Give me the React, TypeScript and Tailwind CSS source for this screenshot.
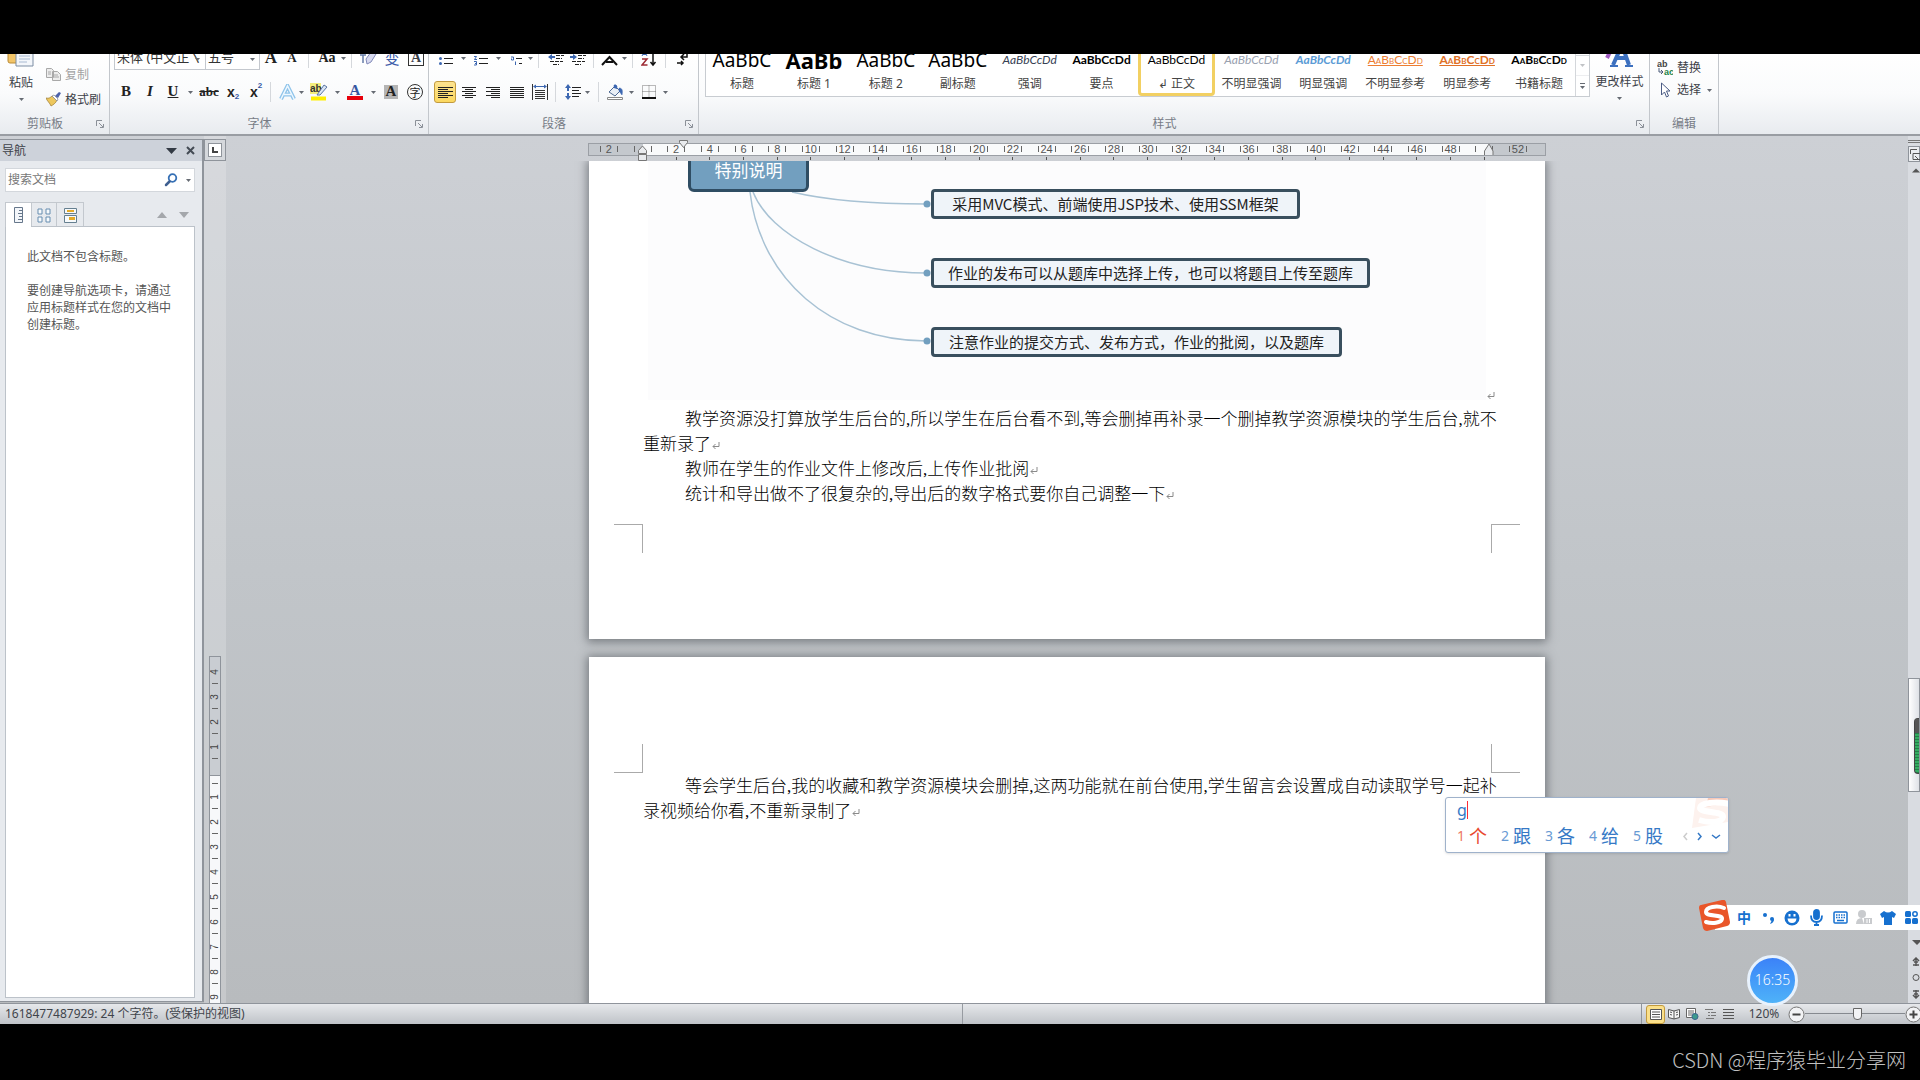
import type { ReactNode } from 'react'

const styleCards = [
  { name: '标题', preview: 'AaBbC', look: "font-['Noto_Sans'] text-[19px] leading-6 text-black" },
  { name: '标题 1', preview: 'AaBb', look: "font-['Noto_Sans'] text-[22px] leading-6 font-bold text-black" },
  { name: '标题 2', preview: 'AaBbC', look: "font-['Noto_Sans'] text-[19px] leading-6 text-black" },
  { name: '副标题', preview: 'AaBbC', look: "font-['Noto_Sans'] text-[19px] leading-6 text-black" },
  { name: '强调', preview: 'AaBbCcDd', look: "font-['Lato'] text-xs leading-6 italic text-gray-700" },
  { name: '要点', preview: 'AaBbCcDd', look: "font-['Lato'] text-xs leading-6 font-bold text-black" },
  { name: '↲ 正文', preview: 'AaBbCcDd', look: "font-['Lato'] text-xs leading-6 text-black", active: true },
  { name: '不明显强调', preview: 'AaBbCcDd', look: "font-['Lato'] text-xs leading-6 italic text-gray-400" },
  { name: '明显强调', preview: 'AaBbCcDd', look: "font-['Lato'] text-xs leading-6 font-bold italic text-[#5b9bd5]" },
  { name: '不明显参考', preview: 'AaBbCcDd', look: "font-['Lato'] text-xs leading-6 [font-variant:small-caps] underline text-[#ed7d31]" },
  { name: '明显参考', preview: 'AaBbCcDd', look: "font-['Lato'] text-xs leading-6 [font-variant:small-caps] font-bold underline text-[#e07026]" },
  { name: '书籍标题', preview: 'AaBbCcDd', look: "font-['Lato'] text-xs leading-6 [font-variant:small-caps] font-bold text-black" }
]

const rulerUnits = Array.from({ length: 28 }, (_, i) => i * 2 - 2)
const verticalUnits = [4, 3, 2, 1, 0, 1, 2, 3, 4, 5, 6, 7, 8, 9]
const candidates = ['个', '跟', '各', '给', '股']

function Caret({ className = 'w-3' }: { className?: string }) {
  return (
    <span className={`flex shrink-0 items-center justify-center ${className}`}>
      <svg width="5" height="3" viewBox="0 0 5 3">
        <path d="M0 0h5L2.500 3z" fill="#666b73" />
      </svg>
    </span>
  )
}

function Tool({ label, className = 'w-6', children }: { label: string; className?: string; children: ReactNode }) {
  return (
    <button type="button" aria-label={label} className={`flex h-[22px] shrink-0 items-center justify-center ${className}`}>
      {children}
    </button>
  )
}

function Divider({ className = 'mx-1' }: { className?: string }) {
  return <span className={`h-5 w-px shrink-0 bg-[#d5d8dc] ${className}`} />
}

function Group({ title, className, launcher = true, children }: { title: string; className: string; launcher?: boolean; children: ReactNode }) {
  return (
    <section className={`flex h-full shrink-0 flex-col justify-end border-r border-[#c3c7cc] ${className}`}>
      {children}
      <div className="flex h-[22px] shrink-0 items-center pt-[2px] text-[#777c86]">
        <span className={`flex-1 text-center ${launcher ? 'pr-[6px]' : ''}`}>{title}</span>
        {launcher ? (
          <button type="button" aria-label={`${title}设置`} className="w-[13px]">
            <svg width="8" height="8" viewBox="0 0 8 8" fill="none" stroke="#8b9098">
              <path d="M.5 6V.5H6M3 3l4 4M7.500 4v3.500H4" />
            </svg>
          </button>
        ) : null}
      </div>
    </section>
  )
}

function Lines({ rows, color = '#222' }: { rows: number[][]; color?: string }) {
  return (
    <svg width="15" height="13" viewBox="0 0 15 13" stroke={color} strokeWidth="1">
      {rows.map(([from, to], i) => (
        <path key={i} d={`M${from} ${i * 2 + 1.5}H${to}`} />
      ))}
    </svg>
  )
}

function ListIcon({ kind }: { kind: 'bullet' | 'number' | 'multi' | 'outdent' | 'indent' }) {
  if (kind === 'outdent' || kind === 'indent') {
    return (
      <svg width="17" height="15" viewBox="0 0 17 15">
        <path d="M2 1.500h13M8 4.500h8M8 7.500h6M2 10.500h13M5 13.500h6" stroke="#222" strokeDasharray="4 1" />
        <path d={kind === 'outdent' ? 'M0 6l4-3v2h3v2H4v2z' : 'M7 6L3 3v2H0v2h3v2z'} fill="#3c67b1" />
      </svg>
    )
  }
  return (
    <svg width="15" height="16" viewBox="0 0 15 16">
      <path d={kind === 'multi' ? 'M5 2.500h9M8 8.500h6M11 13.500h3' : 'M5 2.500h9M5 8.500h9M5 13.500h9'} stroke="#222" />
      {kind === 'bullet' ? (
        <g fill="#3c67b1">
          <circle cx="1.500" cy="2.500" r="1.500" />
          <circle cx="1.500" cy="8.500" r="1.500" />
          <circle cx="1.500" cy="13.500" r="1.500" />
        </g>
      ) : (
        <g fill="none" stroke="#3c67b1">
          <path d={kind === 'number' ? 'M0 1.500h1.500V4M0 6.500h2.500L.5 9.500H3M0 11.500h2.500v3.500H0M1 13.500h1' : 'M0 1.500h2V4M3 7h2.500v3H3.500V8.500M7.500 11.500V15'} />
        </g>
      )}
    </svg>
  )
}

function ClipboardGroup() {
  return (
    <Group title="剪贴板" className="w-[110px]">
      <div className="flex shrink-0 items-end gap-2 pl-2">
        <button type="button" className="flex w-[26px] flex-col items-center">
          <svg width="28" height="30" viewBox="0 0 28 30">
            <rect x="1" y="2" width="18" height="24" rx="2" fill="#f3c568" stroke="#b98a35" />
            <path d="M9 8h17v21H9z" fill="#f4f7fb" stroke="#7d8da3" />
            <path d="M12 13h11M12 16h11M12 19h11M12 22h11M12 25h8" stroke="#a9bad2" />
          </svg>
          <span className="mt-2 leading-4">粘贴</span>
          <Caret className="mt-[2px] mb-[7px] h-3" />
        </button>
        <div className="flex flex-col pl-1">
          <button type="button" className="flex h-[25px] items-center gap-1 text-[#a3a3a3]">
            <svg width="15" height="13" viewBox="0 0 15 13" fill="#ededed" stroke="#a8a8a8">
              <path d="M.5.5h5l2 2v7h-7zM6.500 3.500h5l3 3v6h-8z" />
              <path d="M2 4h3M2 6h3M8 7h4M8 9h5" />
            </svg>
            <span>复制</span>
          </button>
          <button type="button" className="flex h-[25px] items-center gap-1">
            <svg width="15" height="15" viewBox="0 0 15 15">
              <path d="M0 6c3 1 5-1 6-2l5 4c-1 3-4 5-6 6-1-3-4-5-5-8z" fill="#edc75d" stroke="#9c7a2f" strokeWidth=".7" />
              <path d="M6 4l2-1 4 4-1 2z" fill="#fff" stroke="#7b8088" strokeWidth=".7" />
              <path d="M9 4l4-4 2 1-3 5z" fill="#4b61aa" />
            </svg>
            <span>格式刷</span>
          </button>
        </div>
      </div>
    </Group>
  )
}

function FontGroup() {
  return (
    <Group title="字体" className="w-[319px]">
      <div className="mb-[11px] flex h-6 shrink-0 items-center pl-1">
        <div className="relative h-6">
          <select aria-label="字体" className="h-6 w-[92px] appearance-none border border-[#c4c8ce] bg-white pl-[2px] text-[13px] text-[#333]">
            <option>宋体 (中文正〵</option>
          </select>
          <Caret className="pointer-events-none absolute top-1/2 right-[5px] w-2" />
        </div>
        <div className="relative h-6">
          <select aria-label="字号" className="h-6 w-[54px] appearance-none border border-l-0 border-[#c4c8ce] bg-white pl-[2px] text-[13px] text-[#333]">
            <option>五号</option>
          </select>
          <Caret className="pointer-events-none absolute top-1/2 right-1 w-2" />
        </div>
        <Tool label="增大字体" className="w-[22px]"><span className="font-['Liberation_Serif'] text-[17px] font-bold text-[#222]">A</span></Tool>
        <Tool label="缩小字体" className="w-5"><span className="font-['Liberation_Serif'] text-[13px] font-bold text-[#222]">A</span></Tool>
        <Divider className="mx-[6px]" />
        <Tool label="更改大小写"><span className="font-['Liberation_Serif'] text-sm font-bold text-[#222]">Aa</span></Tool>
        <Caret className="w-2" />
        <Divider className="mx-1" />
        <Tool label="清除格式">
          <svg width="18" height="16" viewBox="0 0 18 16">
            <path d="M7 9l5-7 5 2-5 8-4 2z" fill="#d7d9ef" stroke="#8189b8" />
            <path d="M1 5h6M4 5v8" stroke="#667ca8" strokeWidth="1.500" />
          </svg>
        </Tool>
        <Tool label="拼音指南"><span className="font-['Noto_Sans_CJK_SC'] text-[15px] text-[#3a59a8]">变</span></Tool>
        <Tool label="字符边框"><span className="flex h-4 w-4 items-center justify-center border border-[#333] font-['Liberation_Serif'] text-sm font-bold">A</span></Tool>
      </div>
      <div className="mb-[9px] flex shrink-0 items-center pl-1 font-['Liberation_Serif'] text-[15px] font-bold text-[#222]">
        <Tool label="加粗">B</Tool>
        <Tool label="倾斜"><i>I</i></Tool>
        <Tool label="下划线" className="w-[22px]"><u>U</u></Tool>
        <Caret />
        <Tool label="删除线" className="w-[26px]"><s className="text-[13px]">abc</s></Tool>
        <Tool label="下标" className="w-[22px]">
          <span className="font-['Liberation_Sans'] text-sm">x</span><span className="self-end font-['Liberation_Sans'] text-[8px] text-[#3457a5]">2</span>
        </Tool>
        <Tool label="上标">
          <span className="font-['Liberation_Sans'] text-sm">x</span><span className="self-start font-['Liberation_Sans'] text-[8px] text-[#3457a5]">2</span>
        </Tool>
        <Divider className="mr-[6px] ml-[2px]" />
        <Tool label="文本效果" className="w-5">
          <svg width="17" height="17" viewBox="0 0 17 17" fill="none">
            <path d="M2 15L8.500 2 15 15M5 10.500h7" stroke="#8fc4ea" strokeWidth="4" />
            <path d="M2 15L8.500 2 15 15M5 10.500h7" stroke="#eef8ff" strokeWidth="1.500" />
          </svg>
        </Tool>
        <Caret className="w-2" />
        <Tool label="突出显示" className="w-7">
          <svg width="18" height="18" viewBox="0 0 18 18">
            <path d="M1 13.500h15v4H1z" fill="#ffee00" />
            <path d="M0 0h11v11H0z" fill="#f4ee7c" />
            <text x="0" y="9" fontSize="10" fontFamily="Liberation Sans" fill="#333">ab</text>
            <path d="M7 12l7-10 3 2-7 8z" fill="#dbe6f4" stroke="#5b76a3" />
          </svg>
        </Tool>
        <Caret className="w-2" />
        <Tool label="字体颜色" className="w-7">
          <span className="flex h-4 w-4 items-center justify-center border-b-4 border-red-600 text-[15px] leading-3 text-[#3657a0]">A</span>
        </Tool>
        <Caret className="w-2" />
        <Tool label="字符底纹" className="w-7"><span className="flex h-[14px] w-[14px] items-center justify-center bg-[#b5b5b5]">A</span></Tool>
        <Tool label="带圈字符" className="w-5">
          <span className="flex h-4 w-4 items-center justify-center rounded-full border border-[#333] font-['Noto_Sans_CJK_SC'] text-[11px] leading-3 font-normal">字</span>
        </Tool>
      </div>
    </Group>
  )
}

function ParagraphGroup() {
  return (
    <Group title="段落" className="w-[270px]">
      <div className="mb-[11px] flex h-6 shrink-0 items-center pl-[5px]">
        <Tool label="项目符号"><ListIcon kind="bullet" /></Tool>
        <Caret className="w-[11px]" />
        <Tool label="编号"><ListIcon kind="number" /></Tool>
        <Caret className="w-[11px]" />
        <Tool label="多级列表" className="w-[22px]"><ListIcon kind="multi" /></Tool>
        <Caret className="w-2" />
        <Divider className="mr-[6px] ml-1" />
        <Tool label="减少缩进量" className="w-[22px]"><ListIcon kind="outdent" /></Tool>
        <Tool label="增加缩进量" className="w-[22px]"><ListIcon kind="indent" /></Tool>
        <Divider className="mx-1" />
        <Tool label="中文版式" className="w-[22px]">
          <svg width="17" height="15" viewBox="0 0 17 15" fill="none" stroke="#111" strokeWidth="2"><path d="M1 14l7.500-8L16 14M5 11h7M5 2h7" /></svg>
        </Tool>
        <Caret className="w-2" />
        <Divider className="mx-1" />
        <Tool label="排序">
          <svg width="16" height="17" viewBox="0 0 16 17" fill="none">
            <path d="M1 6l2.500-5L6 6M2 4.500h3" stroke="#3c67b1" />
            <path d="M1 9h5L1 15h5.500" stroke="#9d2b35" strokeWidth="1.500" />
            <path d="M12 1v14M9.500 12l2.500 3 2.500-3" stroke="#111" strokeWidth="1.500" />
          </svg>
        </Tool>
        <Divider className="mx-1" />
        <Tool label="显示编辑标记">
          <svg width="11" height="16" viewBox="0 0 11 16" fill="none" stroke="#111" strokeWidth="1.500"><path d="M10 1v6H4M7 4L4 7l3 3M0 13h6M4 11l2 2-2 2" /></svg>
        </Tool>
      </div>
      <div className="mb-[9px] flex shrink-0 items-center pl-[5px]">
        <Tool label="左对齐" className="mr-px w-[22px] rounded-[3px] border border-[#c29a3e] bg-gradient-to-b from-[#fde38f] to-[#fbd85f]">
          <Lines rows={[[0, 15], [0, 10], [0, 15], [0, 10], [0, 15], [0, 10]]} />
        </Tool>
        <Tool label="居中"><Lines rows={[[0, 14], [3, 11], [0, 14], [3, 11], [0, 14], [3, 11]]} /></Tool>
        <Tool label="右对齐"><Lines rows={[[0, 14], [5, 14], [0, 14], [5, 14], [0, 14], [5, 14]]} /></Tool>
        <Tool label="两端对齐"><Lines rows={[[0, 14], [0, 14], [0, 14], [0, 14], [0, 14], [0, 14]]} /></Tool>
        <Tool label="分散对齐" className="w-[22px]">
          <svg width="16" height="16" viewBox="0 0 16 16">
            <path d="M.5 0v16M15.500 0v16M3 6.500h10M3 8.500h10M3 10.500h10M3 12.500h10M3 14.500h10" stroke="#333" />
            <path d="M1 2.500l3-2v1.500h8V.5l3 2-3 2V3H4v1.500z" fill="#3c67b1" />
          </svg>
        </Tool>
        <Divider className="mr-[7px] ml-1" />
        <Tool label="行距" className="w-5">
          <svg width="16" height="16" viewBox="0 0 16 16">
            <path d="M3 0l3 4H4v3H2V4H0zM3 16l3-4H4V9H2v3H0z" fill="#3c67b1" />
            <path d="M7 3.500h9M7 6.500h7M7 9.500h9M7 12.500h7" stroke="#222" />
          </svg>
        </Tool>
        <Caret className="w-2" />
        <Divider className="mr-[6px] ml-[7px]" />
        <Tool label="底纹" className="w-5">
          <svg width="17" height="16" viewBox="0 0 17 16">
            <path d="M2 8l6-6 5 5-5 5z" fill="#e9eef5" stroke="#4d6891" />
            <path d="M7 4V1q2-1 3 1v3M12 4c3 0 4 2 3 7l-3-4z" fill="#3c67b1" stroke="#3c67b1" strokeWidth=".5" />
            <path d="M.5 13.500h15v2H.5z" fill="#fff" stroke="#888" />
          </svg>
        </Tool>
        <Caret />
        <Tool label="框线">
          <svg width="14" height="14" viewBox="0 0 14 14" fill="none" stroke="#777">
            <path d="M.5.5h13v12H.5zM7 .5v12M.5 6.500h13" strokeDasharray="1 1" />
            <path d="M0 13h14" stroke="#111" strokeWidth="2" />
          </svg>
        </Tool>
        <Caret className="w-2" />
      </div>
    </Group>
  )
}

function StylesGroup() {
  return (
    <Group title="样式" className="w-[951px]">
      <div className="flex shrink-0 items-end pl-[6px]">
        <div className="mb-[15px] flex h-[60px] w-[885px] shrink-0 border border-[#c8ccd1] bg-white">
          {styleCards.map((card) => (
            <button
              type="button"
              key={card.name}
              className={`flex min-w-0 flex-1 flex-col items-center justify-end overflow-hidden ${
                card.active ? 'rounded-sm border-[3px] border-[#f2d062]' : 'pb-[3px]'
              }`}
            >
              <span className={card.look}>{card.preview}</span>
              <span className="mt-[3px] leading-[18px] whitespace-nowrap text-[#444]">{card.name}</span>
            </button>
          ))}
          <div className="flex w-[14px] flex-col border-l border-[#d4d7db]">
            <button type="button" aria-label="向上" className="h-[18px] border-b border-[#d4d7db]" />
            <button type="button" aria-label="向下" className="flex flex-1 items-center justify-center border-b border-[#d4d7db] opacity-40"><Caret /></button>
            <button type="button" aria-label="更多样式" className="flex h-[20px] flex-col items-center justify-center gap-[2px]">
              <span className="h-px w-[5px] bg-[#666b73]" />
              <Caret />
            </button>
          </div>
        </div>
        <button type="button" className="flex flex-1 flex-col items-center pb-2">
          <svg width="32" height="24" viewBox="0 0 32 24" fill="none">
            <path d="M3 14L10 0" stroke="#a05bc0" strokeWidth="4" />
            <path d="M9 21L18 1l7 20M12 14h10" stroke="#3c70bf" strokeWidth="4" />
            <path d="M6 22h8M21 22h8" stroke="#3c70bf" strokeWidth="2" />
          </svg>
          <span className="mt-1 leading-5">更改样式</span>
          <Caret className="h-3" />
        </button>
      </div>
    </Group>
  )
}

function EditGroup() {
  return (
    <Group title="编辑" className="w-[69px]" launcher={false}>
      <div className="mb-[11px] flex shrink-0 flex-col pl-[7px]">
        <button type="button" className="flex h-[22px] items-center gap-1">
          <svg width="16" height="18" viewBox="0 0 16 18" fontFamily="Liberation Sans" fontWeight="bold" fontSize="9">
            <text x="0" y="8" fill="#444">ab</text>
            <text x="7" y="16" fill="#238449">ac</text>
            <path d="M2 9v4h4M4 11l2 2-2 2" fill="none" stroke="#4b5a78" />
          </svg>
          <span>替换</span>
        </button>
        <button type="button" className="flex h-[22px] items-center gap-1">
          <svg width="16" height="16" viewBox="0 0 16 16">
            <path d="M4.500 1v12l3-3 2 5 2-1-2-5h3.500z" fill="#fff" stroke="#4b5c84" />
          </svg>
          <span>选择</span>
          <Caret className="w-2" />
        </button>
      </div>
    </Group>
  )
}

function NavigationPane() {
  return (
    <aside className="mt-[3px] mb-px flex w-[204px] shrink-0 flex-col border-t border-r-2 border-b border-[#8f949b] bg-[#e7eaee]">
      <header className="flex h-[21px] items-center bg-[#cdd2da] pr-[3px] pl-[2px]">
        <h2 className="flex-1 leading-5">导航</h2>
        <button type="button" aria-label="任务窗格选项" className="flex w-5 justify-center">
          <svg width="11" height="6" viewBox="0 0 11 6"><path d="M0 0h11L5.500 6z" fill="#333a44" /></svg>
        </button>
        <button type="button" aria-label="关闭" className="flex w-[18px] justify-center">
          <svg width="9" height="9" viewBox="0 0 9 9" stroke="#444b55" strokeWidth="2"><path d="M1 1l7 7M8 1L1 8" /></svg>
        </button>
      </header>
      <div className="mt-[7px] mr-[7px] ml-[5px] flex h-6 items-center border border-[#d3d7dc] bg-white">
        <input type="search" aria-label="搜索文档" placeholder="搜索文档" className="min-w-0 flex-1 pl-[2px] text-xs outline-none placeholder:text-[#777]" />
        <button type="button" aria-label="搜索">
          <svg width="14" height="14" viewBox="0 0 14 14" fill="none" strokeLinecap="round">
            <circle cx="8.500" cy="5" r="3.800" stroke="#3670b5" strokeWidth="1.800" />
            <path d="M5.500 8.500L2 12" stroke="#3e5f90" strokeWidth="2.500" />
          </svg>
        </button>
        <Caret className="ml-1 w-3" />
      </div>
      <div className="mt-[10px] mr-[7px] ml-[5px] flex h-[25px]">
        <button type="button" aria-label="标题" className="z-10 flex w-[26px] items-center justify-center border-t border-l border-[#c3c8ce] bg-white">
          <svg width="10" height="16" viewBox="0 0 10 16" fill="#f3f6fa" stroke="#66778b">
            <path d="M.5.5h8v15h-8z" />
            <path d="M5 3.500h3M4 6.500h4M5 9.500h3M4 12.500h4" />
          </svg>
        </button>
        <button type="button" aria-label="页面" className="flex w-[26px] items-center justify-center border border-b-0 border-[#c3c8ce]">
          <svg width="14" height="15" viewBox="0 0 14 15" fill="#f7fafc" stroke="#668db0">
            <path d="M1 1h4v5H1zM9 1h4v5H9zM1 9h4v5H1zM9 9h4v5H9z" />
          </svg>
        </button>
        <button type="button" aria-label="结果" className="flex w-[27px] items-center justify-center border border-b-0 border-l-0 border-[#c3c8ce]">
          <svg width="13" height="15" viewBox="0 0 13 15" fill="#f7fafc" stroke="#668090">
            <path d="M.5.5h12v5H.5zM.5 7.500h12v7H.5z" />
            <path d="M3 2h7v2H3zM5 9h6v3H5z" fill="#e5ab29" stroke="none" />
          </svg>
        </button>
        <div className="flex flex-1 items-center justify-end gap-3 pr-[6px]">
          <button type="button" aria-label="上一标题"><svg width="10" height="6" viewBox="0 0 10 6"><path d="M0 6h10L5 0z" fill="#a4a7ab" /></svg></button>
          <button type="button" aria-label="下一标题"><svg width="10" height="6" viewBox="0 0 10 6"><path d="M0 0h10L5 6z" fill="#a4a7ab" /></svg></button>
        </div>
      </div>
      <div className="-mt-px mr-[7px] mb-[3px] ml-[5px] flex-1 border border-[#bcc2c9] bg-white px-[21px] pt-[21px] leading-[17px] text-[#555]">
        <p>此文档不包含标题。</p>
        <p className="mt-[17px]">要创建导航选项卡，请通过应用标题样式在您的文档中创建标题。</p>
      </div>
    </aside>
  )
}

function VerticalRuler() {
  return (
    <div className="flex w-[22px] shrink-0 flex-col items-center overflow-hidden bg-white/20 pt-[3px]">
      <button type="button" aria-label="左对齐制表符" className="flex h-[22px] w-[22px] shrink-0 items-center justify-center border border-[#8f949b] bg-[#d5d8dc]">
        <span className="flex h-[14px] w-[14px] items-center justify-center border border-[#8f949b] bg-white">
          <span className="h-[6px] w-[6px] border-b-2 border-l-2 border-[#444]" />
        </span>
      </button>
      <div className="mt-[495px] w-3 flex-1 overflow-hidden border-x border-t border-[#8f949b] bg-[linear-gradient(#c9cdd2_118px,#8f949b_118px,#8f949b_119px,#f7f8fa_119px)] pt-[2px]">
        {verticalUnits.map((unit, i) => (
          <div key={i} className="relative flex h-[25px] items-center justify-center">
            {unit > 0 ? <span className="-rotate-90 font-['Liberation_Sans'] text-[10px] leading-3 text-[#444]">{unit}</span> : null}
            <span className="absolute bottom-0 h-px w-[6px] bg-[#666]" />
          </div>
        ))}
      </div>
    </div>
  )
}

function HorizontalRuler() {
  return (
    <div className="relative mx-auto mt-[7px] w-[958px] shrink-0 font-['Liberation_Sans'] text-[11px] text-[#555]">
      <div className="flex h-[13px] items-center border border-[#9b9fa5] bg-[linear-gradient(90deg,#c4c8cd_54px,#f9fafb_54px,#f9fafb_901px,#c4c8cd_901px)] pr-[10px] pb-px pl-[3px]">
        {rulerUnits.map((unit) => (
          <div key={unit} className="flex min-w-0 flex-1 justify-center">
            <span className="flex w-[18px] items-center justify-between leading-3">
              <span className="h-[6px] w-px bg-[#666]" />
              {unit !== 0 && unit !== 50 ? <span>{Math.abs(unit)}</span> : null}
              <span className="h-[6px] w-px bg-[#666]" />
            </span>
          </div>
        ))}
      </div>
      <div className="flex h-[5px] items-center pr-[11px] pl-1">
        {rulerUnits.map((unit) => (
          <div key={unit} className="flex flex-1 justify-center">
            {unit > 0 && unit < 52 ? <span className="h-[3px] w-px bg-[#555]" /> : null}
          </div>
        ))}
      </div>
      <svg className="absolute -top-[4px] left-[50px]" width="50" height="23" viewBox="0 0 50 23" fill="#e9ebee" stroke="#777">
        <path d="M.5 14.500v-3L4.500 7l4 4.500v3zM.5 15.500h8v6h-8zM41.500 1.500h8v2l-4 5-4-5z" />
      </svg>
      <svg className="absolute -top-px left-[896px]" width="10" height="14" viewBox="0 0 10 14" fill="#e9ebee" stroke="#777">
        <path d="M.5 13V9L5 2l4 7v4" />
      </svg>
    </div>
  )
}

function ReturnMark() {
  return (
    <svg className="ml-px inline-block shrink-0" width="8" height="8" viewBox="0 0 8 8" fill="none" stroke="#8a8a8a">
      <path d="M7 0v4.500H1M3.500 2L1 4.500 3.500 7" />
    </svg>
  )
}

function Topic({ className, children }: { className: string; children: ReactNode }) {
  return (
    <div className={`absolute left-[283px] flex h-[30px] items-center justify-center rounded-[4px] border-[3px] border-[#394f5e] bg-[#eff4f9] text-[15px] whitespace-nowrap text-[#222] ${className}`}>
      {children}
    </div>
  )
}

function MindMap() {
  return (
    <div className="relative ml-[5px] h-[239px] w-[838px] shrink-0 overflow-hidden bg-[#fcfcfd] font-['Noto_Sans_CJK_SC',sans-serif]">
      <svg className="absolute inset-0" width="838" height="239" viewBox="0 0 838 239" fill="none" stroke="#a8c2d4" strokeWidth="1.500">
        <path d="M144 31C182 40 232 43 278 43M105 31C122 74 192 112 278 112M102 31C112 117 182 180 278 180" />
        <g fill="#729fbf" stroke="none">
          <circle cx="279" cy="43" r="3.500" />
          <circle cx="279" cy="112" r="3.500" />
          <circle cx="279" cy="180" r="3.500" />
        </g>
      </svg>
      <div className="absolute -top-[13px] left-[40px] flex h-11 w-[121px] items-center justify-center rounded-[6px] border-[3px] border-[#2f4d63] bg-[#729fbf] text-[17px] text-white">
        特别说明
      </div>
      <Topic className="top-[28px] w-[369px]">采用MVC模式、前端使用JSP技术、使用SSM框架</Topic>
      <Topic className="top-[97px] w-[439px]">作业的发布可以从题库中选择上传，也可以将题目上传至题库</Topic>
      <Topic className="top-[166px] w-[411px]">注意作业的提交方式、发布方式，作业的批阅，以及题库</Topic>
    </div>
  )
}

function CropMarks({ edge }: { edge: 'top' | 'bottom' }) {
  const side = edge === 'bottom' ? 'border-t' : 'border-b'
  return (
    <div className="flex h-[29px] justify-between px-[25px]">
      <span className={`w-[29px] border-r border-[#aaa] ${side}`} />
      <span className={`w-[29px] border-l border-[#aaa] ${side}`} />
    </div>
  )
}

function DocumentArea() {
  const sheet = 'mx-auto w-[956px] shrink-0 bg-white shadow-[0_1px_9px_2px_rgba(70,75,80,0.6)]'
  const text = "px-[54px] font-['Liberation_Serif','Noto_Sans_CJK_SC',serif] text-[17px] leading-[25px] font-light whitespace-nowrap text-black"
  return (
    <main className="flex min-w-0 flex-1 flex-col overflow-hidden">
      <HorizontalRuler />
      <div className="flex min-h-0 flex-1 flex-col gap-[18px] overflow-hidden">
        <article className={`h-[478px] ${sheet}`}>
          <div className="flex items-end pl-[54px]">
            <MindMap />
            <ReturnMark />
          </div>
          <div className={`pt-[7px] ${text}`}>
            <p className="indent-[42px]">教学资源没打算放学生后台的,所以学生在后台看不到,等会删掉再补录一个删掉教学资源模块的学生后台,就不</p>
            <p>重新录了<ReturnMark /></p>
            <p className="indent-[42px]">教师在学生的作业文件上修改后,上传作业批阅<ReturnMark /></p>
            <p className="mb-[17px] indent-[42px]">统计和导出做不了很复杂的,导出后的数字格式要你自己调整一下<ReturnMark /></p>
          </div>
          <CropMarks edge="bottom" />
        </article>
        <article className={`h-[600px] pt-[87px] ${sheet}`}>
          <CropMarks edge="top" />
          <div className={`pt-px ${text}`}>
            <p className="indent-[42px]">等会学生后台,我的收藏和教学资源模块会删掉,这两功能就在前台使用,学生留言会设置成自动读取学号一起补</p>
            <p>录视频给你看,不重新录制了<ReturnMark /></p>
          </div>
        </article>
      </div>
    </main>
  )
}

function ScrollBar() {
  return (
    <div className="flex w-3 shrink-0 flex-col overflow-hidden bg-[#d9dce1]">
      <button type="button" aria-label="拆分" className="mt-1 h-[3px] shrink-0 border-y border-[#777]" />
      <button type="button" aria-label="标尺" className="mt-[3px] h-4 shrink-0 border border-[#8f949b] bg-[#eceef1]">
        <svg width="12" height="13" viewBox="0 0 12 13" fill="none" stroke="#555"><path d="M1.500 6V1.500H8M4 5.500h8v6H4zM6 8l3 3" /></svg>
      </button>
      <button type="button" aria-label="向上滚动" className="flex h-4 shrink-0 items-center pl-1">
        <svg className="max-w-none" width="10" height="5" viewBox="0 0 10 5"><path d="M0 5h10L5 0z" fill="#555" /></svg>
      </button>
      <div className="flex flex-1 flex-col">
        <div className="flex-[501]" />
        <div className="flex flex-[95] items-end justify-end border border-[#8f949b] bg-gradient-to-r from-white to-[#dfe2e7] pb-[17px]">
          <span className="flex h-14 w-[5px] flex-col rounded-l-[4px] border border-r-0 border-[#444] bg-[repeating-linear-gradient(#32ab60_0px,#32ab60_2px,#247d48_2px,#247d48_3px)]">
            <span className="h-[14px] bg-[#555]" />
          </span>
        </div>
        <div className="flex-[143]" />
      </div>
      <div className="flex h-[68px] shrink-0 flex-col justify-between pb-1 pl-1 text-[#555]">
        <button type="button" aria-label="向下滚动"><svg className="max-w-none" width="10" height="14" viewBox="0 0 10 14"><path d="M0 5h10L5 10z" fill="currentColor" /></svg></button>
        <button type="button" aria-label="前一页"><svg width="8" height="9" viewBox="0 0 8 9" fill="none" stroke="currentColor" strokeWidth="1.500"><path d="M1 4l3-3 3 3M1 8h6M4 1v8M2 5h4" /></svg></button>
        <button type="button" aria-label="选择浏览对象"><svg width="8" height="9" viewBox="0 0 8 9" fill="none" stroke="currentColor"><circle cx="4" cy="4.500" r="3" /></svg></button>
        <button type="button" aria-label="下一页"><svg width="8" height="9" viewBox="0 0 8 9" fill="none" stroke="currentColor" strokeWidth="1.500"><path d="M1 5l3 3 3-3M1 1h6M4 0v8M2 4h4" /></svg></button>
      </div>
    </div>
  )
}

function StatusBar() {
  return (
    <footer className="flex h-[21px] shrink-0 items-center border-t border-[#8f949b] bg-gradient-to-b from-[#e6e8eb] to-[#bfc3c8] text-[#3f444b]">
      <div className="flex h-full flex-1 items-center border-r border-[#979ba1] pl-[5px]">1618477487929: 24 个字符。(受保护的视图)</div>
      <div className="flex h-full flex-1 items-center justify-end">
        <div className="flex h-full items-center border-l border-[#8f949b] pl-1">
          <button type="button" aria-label="页面视图" className="flex h-[19px] w-[19px] items-center justify-center rounded-[3px] border border-[#c29a3e] bg-[#fbe08a]">
            <svg width="12" height="11" viewBox="0 0 12 11" fill="#fff" stroke="#555"><path d="M.5.5h11v10H.5zM2 3h8M2 5.500h8M2 8h8" /></svg>
          </button>
          <button type="button" aria-label="阅读版式视图" className="flex w-[18px] justify-center">
            <svg width="12" height="12" viewBox="0 0 12 12" fill="#f5f5f5" stroke="#555"><path d="M.5 1.500L6 3l5.500-1.500v8L6 11 .5 9.500zM6 3v8M2 4l2 .5M2 6.500l2 .5M8 4.500l2-.5M8 7l2-.5" /></svg>
          </button>
          <button type="button" aria-label="Web版式视图" className="flex w-[18px] justify-center">
            <svg width="13" height="12" viewBox="0 0 13 12" fill="#fff" stroke="#666"><path d="M.5.5h9v9h-9zM2 3h6M2 5h6M2 7h4" /><circle cx="9" cy="8.500" r="3" fill="#3c9a8c" stroke="#3a6491" /></svg>
          </button>
          <button type="button" aria-label="大纲视图" className="flex w-[18px] justify-center">
            <svg width="11" height="10" viewBox="0 0 11 10" stroke="#777"><path d="M0 .5h8M3 3.500h2M6 3.500h5M3 6.500h2M6 6.500h5M1 9.500h8" /></svg>
          </button>
          <button type="button" aria-label="草稿" className="flex w-[18px] justify-center">
            <svg width="11" height="10" viewBox="0 0 11 10" stroke="#555"><path d="M0 .5h11M0 3.500h11M0 6.500h11M0 9.500h11" /></svg>
          </button>
        </div>
        <button type="button" className="w-[51px] pl-[3px] text-center">120%</button>
        <button type="button" aria-label="缩小"><svg width="17" height="17" viewBox="0 0 17 17" fill="#f2f3f5" stroke="#777"><circle cx="8.500" cy="8.500" r="7.500" /><path d="M4.500 8.500h8" stroke="#444" strokeWidth="2" /></svg></button>
        <input
          type="range"
          aria-label="显示比例"
          min={0}
          max={100}
          defaultValue={53}
          className="h-4 w-[100px] appearance-none bg-[linear-gradient(transparent_7px,#85898f_7px,#85898f_8px,transparent_8px)] [&::-webkit-slider-thumb]:h-3 [&::-webkit-slider-thumb]:w-[9px] [&::-webkit-slider-thumb]:appearance-none [&::-webkit-slider-thumb]:rounded-b-[4px] [&::-webkit-slider-thumb]:border [&::-webkit-slider-thumb]:border-[#666] [&::-webkit-slider-thumb]:bg-[#f2f3f5]"
        />
        <button type="button" aria-label="放大" className="w-[15px] overflow-hidden"><svg className="max-w-none" width="17" height="17" viewBox="0 0 17 17" fill="#f2f3f5" stroke="#777"><circle cx="8.500" cy="8.500" r="7.500" /><path d="M4.500 8.500h8M8.500 4.500v8" stroke="#444" strokeWidth="2" /></svg></button>
      </div>
    </footer>
  )
}

function CandidateWindow() {
  return (
    <div className="absolute top-[797px] left-[1445px] z-20 h-14 w-[284px] overflow-hidden rounded-[3px] border border-[#9fb2cb] bg-white pl-[11px] text-[#3579c6] shadow">
      <svg className="absolute top-0 right-0" width="40" height="30" viewBox="0 0 40 30" fill="none">
        <path d="M8 0h32v24L4 30z" fill="#fdf2ee" />
        <path d="M20 0h20v5L18 9z" fill="#f7c9b9" />
        <path d="M42 6C28 3 12 5 12 10s24 3 23 9-14 6-24 3" stroke="#fff" strokeWidth="6" />
      </svg>
      <div className="relative flex h-6 items-center">
        <span className="border-r border-red-500 text-[16px] leading-[18px]">g</span>
      </div>
      <div className="relative flex items-center pt-[2px]">
        {candidates.map((word, i) => (
          <button type="button" key={word} className={`flex w-11 items-center gap-1 ${i === 0 ? 'text-[#e8492f]' : ''}`}>
            <span className="text-sm opacity-75">{i + 1}</span>
            <span className="text-lg leading-6">{word}</span>
          </button>
        ))}
        <svg className="ml-1" width="40" height="9" viewBox="0 0 40 9" fill="none" stroke="currentColor" strokeWidth="1.500">
          <path d="M6 1L3 4.500 6 8" stroke="#ccc" />
          <path d="M17 1l3 3.500L17 8M31 3l4 3 4-3" />
        </svg>
      </div>
    </div>
  )
}

function InputMethodBar() {
  return (
    <div className="absolute top-[900px] right-0 z-20 flex items-end text-[#1670cf]">
      <svg className="z-10 shrink-0" width="33" height="32" viewBox="0 0 33 32">
        <path d="M3 5L24 0q3-1 4 2l4 20q0 3-3 4L9 31q-3 0-4-3L1 8q0-3 2-3z" fill="#e9562a" />
        <path d="M26 8C19 5 8 7 8 12c0 5 17 2 16 7-1 4-10 5-16 3" fill="none" stroke="#fff" strokeWidth="4" strokeLinecap="round" />
      </svg>
      <div className="-ml-4 mb-[2px] flex h-[25px] w-[205px] items-center bg-white pl-[17px] [&>button]:flex [&>button]:w-[24px] [&>button]:shrink-0 [&>button]:justify-center">
        <button type="button" aria-label="中文" className="text-sm leading-5 font-bold">中</button>
        <button type="button" aria-label="标点"><svg width="13" height="12" viewBox="0 0 13 12" fill="currentColor"><circle cx="3" cy="3" r="2" /><circle cx="10" cy="7" r="2" /><path d="M12 7q0 4-4 5l2-4z" /></svg></button>
        <button type="button" aria-label="表情"><svg width="16" height="16" viewBox="0 0 16 16"><circle cx="8" cy="8" r="7.500" fill="currentColor" /><path d="M3.500 8.500h9Q12 13 8 13T3.500 8.500z" fill="#fff" /><path d="M5.500 4v2.500M10.500 4v2.500" stroke="#fff" strokeWidth="2" /></svg></button>
        <button type="button" aria-label="语音"><svg width="13" height="17" viewBox="0 0 13 17" fill="none" stroke="currentColor" strokeWidth="1.800"><rect x="4" y="1" width="5" height="9" rx="2.500" fill="currentColor" /><path d="M1 6.500Q1 13 6.500 13T12 6.500M6.500 13v3M4 16h5" /></svg></button>
        <button type="button" aria-label="软键盘"><svg width="15" height="13" viewBox="0 0 15 13" fill="none" stroke="currentColor" strokeWidth="1.500"><rect x="1" y="1" width="13" height="11" rx="1" /><path d="M3 4h9M3 6.500h9" strokeDasharray="1.500 1" /><path d="M4 9.500h7" /></svg></button>
        <button type="button" aria-label="账号"><svg width="16" height="15" viewBox="0 0 16 15" fill="#c9cbce"><circle cx="6" cy="4" r="4" /><path d="M0 14Q0 8 6 8l2 6zM8 8h8v6H8z" /><path d="M11 9v4M13.500 9v4" stroke="#fff" /></svg></button>
        <button type="button" aria-label="皮肤"><svg width="16" height="14" viewBox="0 0 16 14" fill="currentColor"><path d="M4 0q4 3 8 0l4 3-2 4-2-1v8H4V6L2 7 0 3z" /></svg></button>
        <button type="button" aria-label="工具箱"><svg width="14" height="13" viewBox="0 0 14 13" fill="currentColor"><rect width="6" height="6" rx="1.500" /><circle cx="10" cy="3" r="2.200" fill="none" stroke="currentColor" strokeWidth="1.500" /><rect y="7" width="6" height="6" rx="1.500" /><rect x="7" y="7" width="6" height="6" rx="1.500" /></svg></button>
      </div>
    </div>
  )
}

export default function App() {
  return (
    <div className="relative flex h-screen flex-col overflow-hidden bg-black font-['Noto_Sans','Noto_Sans_CJK_SC',sans-serif] text-xs text-[#3d4148]">
      <div className="h-[54px] shrink-0" />
      <div className="flex h-[82px] shrink-0 overflow-hidden border-b-2 border-[#999da3] bg-gradient-to-b from-white via-[#fafbfc] to-[#e8ebef]">
        <ClipboardGroup />
        <FontGroup />
        <ParagraphGroup />
        <StylesGroup />
        <EditGroup />
      </div>
      <div className="flex min-h-0 flex-1 bg-gradient-to-b from-[#cdd0d5] via-[#c1c5c9] to-[#b8bbbe]">
        <NavigationPane />
        <VerticalRuler />
        <DocumentArea />
        <ScrollBar />
      </div>
      <StatusBar />
      <div className="flex h-14 shrink-0 items-center justify-end pt-4 pr-[14px] font-['Noto_Sans_CJK_SC',sans-serif] text-xl font-light text-[#c0c0c0]">
        CSDN @程序猿毕业分享网
      </div>

      <CandidateWindow />
      <InputMethodBar />
      <time className="absolute top-[955px] right-[122px] z-20 flex h-[51px] w-[51px] items-center justify-center rounded-full border-[3px] border-[#e8f2fd] bg-gradient-to-b from-[#3c82f8] to-[#4fb2f8] text-[14px] font-light text-white">
        16:35
      </time>
    </div>
  )
}
